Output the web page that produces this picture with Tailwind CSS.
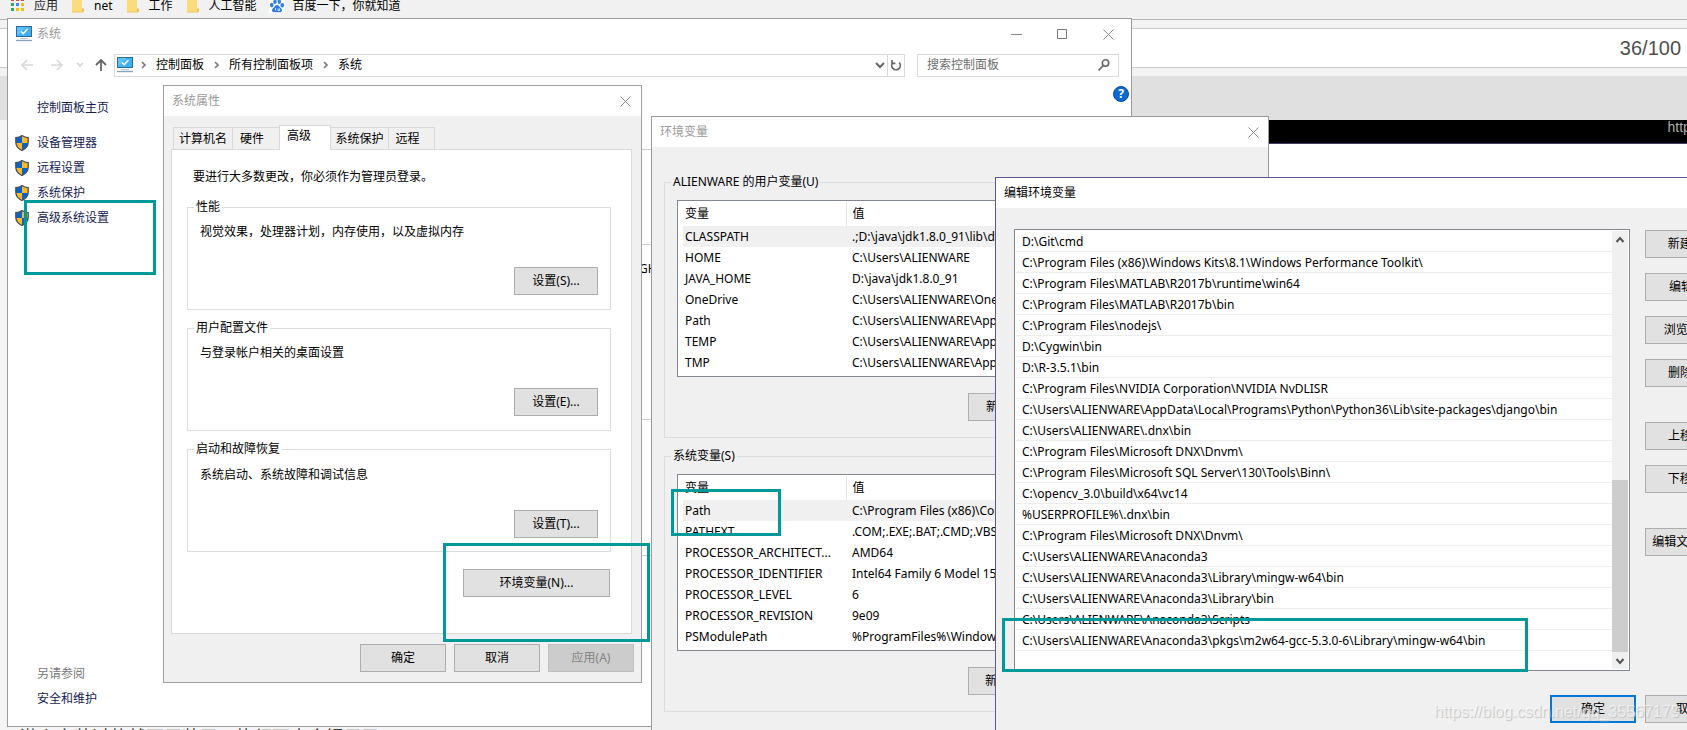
<!DOCTYPE html>
<html lang="zh-CN">
<head>
<meta charset="utf-8">
<title>环境变量</title>
<script src="https://cdn.jsdelivr.net/npm/@tailwindcss/browser@4"></script>
</head>
<body class="relative h-screen overflow-hidden bg-[#f5f5f5] font-['Noto_Sans','Noto_Sans_CJK_SC',sans-serif] text-xs leading-[18px] text-black">

<svg class="hidden" aria-hidden="true">
  <symbol id="pc" viewBox="0 0 16 16">
    <rect x="0.5" y="0.5" width="15" height="10" fill="#3fb0f8" stroke="#2f6a94"/>
    <path d="M1 10 L10 1 H1Z" fill="#5cc2ff"/>
    <path d="M5 5.5 L7.2 7.7 L11.5 3" fill="none" stroke="#fff" stroke-width="1.5"/>
    <path d="M4 12.5h8" stroke="#b9c9d6"/><path d="M0 14.5h16" stroke="#8ba3b8" stroke-width="1.4"/>
  </symbol>
  <symbol id="shield" viewBox="0 0 14 16">
    <path d="M7 .6C5.2 2 3 2.6.8 2.6V7c0 4 2.400 6.800 6.200 8.500C10.800 13.800 13.200 11 13.200 7V2.600C11 2.600 8.800 2 7 .6Z" fill="#0a63c9"/>
    <path d="M7 .6C8.800 2 11 2.600 13.200 2.600V8H7Z" fill="#fbb829"/>
    <path d="M7 15.500C3.600 14 1.200 11.500.9 8H7Z" fill="#fbb829"/>
    <path d="M7 .6C5.200 2 3 2.600.8 2.600V7c0 4 2.400 6.800 6.200 8.500C10.800 13.800 13.200 11 13.200 7V2.600C11 2.600 8.800 2 7 .6Z" fill="none" stroke="#4a4f57" stroke-width="1.300"/>
  </symbol>
  <symbol id="close" viewBox="0 0 11 11"><path d="M.5.5l10 10M10.500.5l-10 10" stroke="currentColor" fill="none"/></symbol>
  <symbol id="crumb" viewBox="0 0 6 8"><path d="M1 1l3 3-3 3" fill="none" stroke="#777" stroke-width="1.600"/></symbol>
  <symbol id="folder" viewBox="0 0 12 13"><path d="M0 0h10v9h2v3H0z" fill="#fbdb7c"/><path d="M10 8.500h2V11l-1 1h-1z" fill="#e9bf4c"/><path d="M0 12h11" stroke="#edc65a"/></symbol>
</svg>

<!-- Browser page behind the windows -->
<main class="flex h-full flex-col overflow-hidden">
  <nav class="flex h-5 shrink-0 items-start border-b border-[#b5b5b5] bg-[#f1f1f1] pl-[11px] leading-3">
    <a href="#" class="flex gap-2.5 text-[#222]">
      <svg class="h-[11px] w-[13px] shrink-0" viewBox="0 0 13 11"><g><path fill="#ea4335" d="M0-2h3v3H0zM5-2h3v3H5zM10-2h3v3h-3z"/><path fill="#34a853" d="M0 3h3v3H0zM0 8h3v3H0z"/><path fill="#4285f4" d="M5 3h3v3H5z"/><path fill="#fbbc05" d="M10 3h3v3h-3zM5 8h3v3H5zM10 8h3v3h-3z"/></g></svg>
      应用</a>
    <a href="#" class="ml-3.5 flex gap-2.5"><svg class="h-[13px] w-3 shrink-0"><use href="#folder"/></svg>net</a>
    <a href="#" class="ml-3.5 flex gap-2.5"><svg class="h-[13px] w-3 shrink-0"><use href="#folder"/></svg>工作</a>
    <a href="#" class="ml-3.5 flex gap-2.5"><svg class="h-[13px] w-3 shrink-0"><use href="#folder"/></svg>人工智能</a>
    <a href="#" class="ml-3 flex gap-2"><svg class="h-[13px] w-4 shrink-0 bg-white" viewBox="0 0 16 13"><g fill="#2b7de9"><ellipse cx="2.800" cy="5" rx="1.800" ry="2.300"/><ellipse cx="6" cy="1.800" rx="1.700" ry="2.300"/><ellipse cx="10.300" cy="1.800" rx="1.700" ry="2.300"/><ellipse cx="13.300" cy="5.300" rx="1.800" ry="2.300"/><path d="M8 5c2 0 2.500 2 4 3.300 1.800 1.600 1 4-1.200 4-1 0-1.800-.4-2.800-.4s-1.800.4-2.800.4c-2.200 0-3-2.400-1.200-4C5.500 7 6 5 8 5z"/></g><path d="M6.500 8v2.500M9 8.500v2h1.500v-2" fill="none" stroke="#fff" stroke-width=".8"/></svg>百度一下，你就知道</a>
  </nav>
  <div class="shrink-0 bg-[#f3f3f3] py-2">
    <div class="flex h-10 items-center justify-end border-y border-[#c9c9c9] bg-white pr-1.5 font-['Liberation_Sans',sans-serif] text-xl text-[#4f4f4f]">36/100</div>
  </div>
  <div class="h-11 shrink-0 bg-[#e0e0e0]"></div>
  <div class="ml-[50%] h-6 shrink-0 overflow-hidden border-b border-[#3f3a66] bg-black pl-[824px] font-['Liberation_Sans',sans-serif] text-sm leading-[15px] whitespace-nowrap text-[#aaa]">https://blog.csdn.net</div>
  <div class="ml-[50%] grow bg-white"></div>
  <p class="-mt-px h-1 shrink-0 pl-5 text-lg leading-[22px] whitespace-nowrap text-[#333]">激么安装过的就不用装了，执行下去会提示已</p>
</main>

<!-- Control panel window -->
<section class="absolute top-[18px] left-[7px] flex h-[709px] w-[1125px] flex-col border border-[#9b9b9b] bg-white">
  <header class="flex h-[30px] items-center pl-2 text-[#999]">
    <svg class="h-4 w-4"><use href="#pc"/></svg>
    <h1 class="ml-[5px]">系统</h1>
    <div class="ml-auto flex gap-[35px] pr-[17px]">
      <button aria-label="最小化"><svg class="h-[11px] w-[11px]"><path d="M0 5.500h11" stroke="#888"/></svg></button>
      <button aria-label="最大化"><svg class="h-[11px] w-[11px]"><path d="M.5.5h9v9h-9z" fill="none" stroke="#777"/></svg></button>
      <button aria-label="关闭" class="text-[#888]"><svg class="h-[11px] w-[11px]"><use href="#close"/></svg></button>
    </div>
  </header>
  <div class="mt-1 flex h-6 items-center pr-3">
    <button aria-label="后退" class="ml-[13px]"><svg class="h-3 w-3" viewBox="0 0 12 12" fill="none" stroke="#d8d8d8" stroke-width="1.600"><path d="M12 6H1M6 1L1 6l5 5"/></svg></button>
    <button aria-label="前进" class="ml-[18px]"><svg class="h-3 w-3" viewBox="0 0 12 12" fill="none" stroke="#d8d8d8" stroke-width="1.600"><path d="M0 6h11M6 1l5 5-5 5"/></svg></button>
    <button aria-label="历史记录" class="ml-[13px]"><svg class="h-2 w-2" viewBox="0 0 8 8" fill="none" stroke="#d0d0d0" stroke-width="1.400"><path d="M1 2l3 3 3-3"/></svg></button>
    <button aria-label="上移" class="ml-[11px]"><svg class="h-3 w-3" viewBox="0 0 12 12" fill="none" stroke="#666" stroke-width="1.800"><path d="M6 12V1M1 6l5-5 5 5"/></svg></button>
    <div class="ml-[7px] flex h-[23px] grow items-center border border-[#d9d9d9] pl-0.5">
      <svg class="h-4 w-4"><use href="#pc"/></svg>
      <svg class="ml-2 h-2 w-1.5"><use href="#crumb"/></svg><a href="#" class="ml-[9px]">控制面板</a>
      <svg class="ml-2.5 h-2 w-1.5"><use href="#crumb"/></svg><a href="#" class="ml-[9px]">所有控制面板项</a>
      <svg class="ml-2.5 h-2 w-1.5"><use href="#crumb"/></svg><a href="#" class="ml-[9px]">系统</a>
      <button aria-label="展开地址" class="ml-auto pr-0.5"><svg class="h-2 w-2.5" viewBox="0 0 10 8" fill="none" stroke="#666" stroke-width="2"><path d="M1 2l4 4 4-4"/></svg></button>
      <button aria-label="刷新" class="flex h-full w-[17px] items-center justify-center border-l border-[#d9d9d9]"><svg class="h-3 w-3" viewBox="0 0 12 12" fill="none" stroke="#666" stroke-width="1.700"><path d="M3 3.400A4.300 4.300 0 1 0 9.200 3.600M2 1v3.300h3.400"/></svg></button>
    </div>
    <label class="ml-3 flex h-[23px] w-[202px] items-center border border-[#d9d9d9] pr-2 pl-[9px]">
      <input type="search" aria-label="搜索" placeholder="搜索控制面板" class="w-0 grow outline-none placeholder:text-[#6d6d6d]">
      <svg class="h-3 w-3" viewBox="0 0 12 12" fill="none" stroke="#666" stroke-width="1.600"><circle cx="7.500" cy="4" r="3.200"/><path d="M5.300 6.500L.6 11.400"/></svg>
    </label>
  </div>
  <div class="flex grow">
    <nav class="flex w-[155px] flex-col items-start pb-[18px] pl-[7px] text-[#151c55]">
      <a href="#" class="mt-[22px] pl-[22px]">控制面板主页</a>
      <a href="#" class="mt-[17px] flex items-center gap-2"><svg class="h-4 w-3.5"><use href="#shield"/></svg>设备管理器</a>
      <a href="#" class="mt-[7px] flex items-center gap-2"><svg class="h-4 w-3.5"><use href="#shield"/></svg>远程设置</a>
      <a href="#" class="mt-[7px] flex items-center gap-2"><svg class="h-4 w-3.5"><use href="#shield"/></svg>系统保护</a>
      <a href="#" class="mt-[7px] flex items-center gap-2"><svg class="h-4 w-3.5"><use href="#shield"/></svg>高级系统设置</a>
      <p class="mt-auto pl-[22px] text-[#777]">另请参阅</p>
      <a href="#" class="mt-[7px] pl-[22px]">安全和维护</a>
    </nav>
    <div class="relative grow">
      <button aria-label="帮助" class="absolute top-[9px] right-0.5 h-4 w-4 rounded-full border border-[#0a4fa0] bg-[#0b69cf] text-xs leading-[14px] font-bold text-white">?</button>
      <div class="mt-[72px] mr-[30px] flex flex-col divide-y divide-[#ccc] border-t border-[#ccc]">
        <div class="h-[95px]"></div>
        <div class="h-[175px] pt-[15px] pl-[476px]">GHz</div>
        <div class="h-[136px]"></div>
        <div></div>
      </div>
    </div>
  </div>
</section>

<!-- System properties -->
<section class="absolute top-[85px] left-[163px] w-[479px] border border-[#a0a0a0] bg-[#f0f0f0] pb-2.5">
  <header class="flex h-[30px] items-center justify-between bg-white pr-[10px] pl-2 text-[#999]">
    <h2>系统属性</h2>
    <button aria-label="关闭" class="text-[#888]"><svg class="h-[11px] w-[11px]"><use href="#close"/></svg></button>
  </header>
  <div class="mt-[9px] flex h-6 items-end pl-[9px]" role="tablist">
    <button role="tab" class="h-[22px] w-[60px] border border-b-0 border-[#d9d9d9]">计算机名</button>
    <button role="tab" class="h-[22px] w-[46px] border-t border-[#d9d9d9] pr-2">硬件</button>
    <button role="tab" aria-selected="true" class="relative -mb-px h-[25px] w-[52px] border border-b-0 border-[#d9d9d9] bg-white pr-3 pb-1">高级</button>
    <button role="tab" class="h-[22px] w-[58px] border-t border-r border-[#d9d9d9]">系统保护</button>
    <button role="tab" class="h-[22px] w-[46px] border-t border-r border-[#d9d9d9] pr-2">远程</button>
  </div>
  <div class="mr-[9px] ml-[7px] border border-[#d9d9d9] bg-white pr-5 pb-9 pl-[15px]">
    <p class="mt-[18px] pl-1.5">要进行大多数更改，你必须作为管理员登录。</p>
    <fieldset class="mt-3 h-[112px] border border-[#dcdcdc] pr-3 pl-1.5">
      <legend class="px-0.5">性能</legend>
      <p class="mt-[7px] pl-1.5">视觉效果，处理器计划，内存使用，以及虚拟内存</p>
      <div class="mt-[26px] flex justify-end"><button class="h-7 w-[84px] border border-[#adadad] bg-[#e1e1e1]">设置(S)...</button></div>
    </fieldset>
    <fieldset class="mt-[9px] h-[112px] border border-[#dcdcdc] pr-3 pl-1.5">
      <legend class="px-0.5">用户配置文件</legend>
      <p class="mt-[7px] pl-1.5">与登录帐户相关的桌面设置</p>
      <div class="mt-[26px] flex justify-end"><button class="h-7 w-[84px] border border-[#adadad] bg-[#e1e1e1]">设置(E)...</button></div>
    </fieldset>
    <fieldset class="mt-[9px] h-[112px] border border-[#dcdcdc] pr-3 pl-1.5">
      <legend class="px-0.5">启动和故障恢复</legend>
      <p class="mt-2 pl-1.5">系统启动、系统故障和调试信息</p>
      <div class="mt-[26px] flex justify-end"><button class="h-7 w-[84px] border border-[#adadad] bg-[#e1e1e1]">设置(T)...</button></div>
    </fieldset>
    <div class="mt-[17px] flex justify-end pr-px"><button class="h-7 w-[147px] border border-[#adadad] bg-[#e1e1e1]">环境变量(N)...</button></div>
  </div>
  <div class="mt-2.5 flex justify-end gap-2 pr-[7px]">
    <button class="h-7 w-[86px] border border-[#adadad] bg-[#e1e1e1]">确定</button>
    <button class="h-7 w-[86px] border border-[#adadad] bg-[#e1e1e1]">取消</button>
    <button disabled class="h-7 w-[86px] border border-[#bfbfbf] bg-[#ccc] text-[#838383]">应用(A)</button>
  </div>
</section>

<!-- Environment variables -->
<section class="absolute top-[116px] left-[651px] w-[618px] border border-[#9b9b9b] bg-[#f0f0f0] pb-14">
  <header class="flex h-[30px] items-center justify-between bg-white pr-[9px] pl-2 text-[#999]">
    <h2>环境变量</h2>
    <button aria-label="关闭" class="text-[#888]"><svg class="h-[11px] w-[11px]"><use href="#close"/></svg></button>
  </header>
  <div class="px-3 pt-[26px]">
    <fieldset class="h-[265px] border border-[#dcdcdc] px-1.5">
      <legend class="px-0.5">ALIENWARE 的用户变量(U)</legend>
      <div class="mx-1.5 mt-[9px] h-[177px] border border-[#82878f] bg-white pt-px pl-[5px]">
        <table class="w-full table-fixed border-collapse text-left whitespace-nowrap">
          <thead><tr class="h-6"><th class="w-[163px] border-r border-[#e5e5e5] pl-0.5 font-normal">变量</th><th class="pl-1.5 font-normal">值</th></tr></thead>
          <tbody>
            <tr class="h-[21px] bg-[#f0f0f0]"><td class="pl-0.5">CLASSPATH</td><td class="overflow-hidden pl-1.5">.;D:\java\jdk1.8.0_91\lib\dt.jar;D:\java\jdk1.8.0_91\lib\tools.jar</td></tr>
            <tr class="h-[21px]"><td class="pl-0.5">HOME</td><td class="pl-1.5">C:\Users\ALIENWARE</td></tr>
            <tr class="h-[21px]"><td class="pl-0.5">JAVA_HOME</td><td class="pl-1.5">D:\java\jdk1.8.0_91</td></tr>
            <tr class="h-[21px]"><td class="pl-0.5">OneDrive</td><td class="pl-1.5">C:\Users\ALIENWARE\OneDrive</td></tr>
            <tr class="h-[21px]"><td class="pl-0.5">Path</td><td class="pl-1.5">C:\Users\ALIENWARE\AppData</td></tr>
            <tr class="h-[21px]"><td class="pl-0.5">TEMP</td><td class="pl-1.5">C:\Users\ALIENWARE\AppData</td></tr>
            <tr class="h-[21px]"><td class="pl-0.5">TMP</td><td class="pl-1.5">C:\Users\ALIENWARE\AppData</td></tr>
          </tbody>
        </table>
      </div>
      <div class="mt-4 flex justify-end gap-[9px] pr-[5px]">
        <button class="h-7 w-[86px] border border-[#adadad] bg-[#e1e1e1]">新建(N)...</button>
        <button class="h-7 w-[86px] border border-[#adadad] bg-[#e1e1e1]">编辑(E)...</button>
        <button class="h-7 w-[86px] border border-[#adadad] bg-[#e1e1e1]">删除(D)</button>
      </div>
    </fieldset>
    <fieldset class="mt-[9px] h-[265px] border border-[#dcdcdc] px-1.5">
      <legend class="px-0.5">系统变量(S)</legend>
      <div class="mx-1.5 mt-[9px] h-[177px] border border-[#82878f] bg-white pt-px pl-[5px]">
        <table class="w-full table-fixed border-collapse text-left whitespace-nowrap">
          <thead><tr class="h-6"><th class="w-[163px] border-r border-[#e5e5e5] pl-0.5 font-normal">变量</th><th class="pl-1.5 font-normal">值</th></tr></thead>
          <tbody>
            <tr class="h-[21px] bg-[#f0f0f0]"><td class="pl-0.5">Path</td><td class="pl-1.5">C:\Program Files (x86)\Common Files</td></tr>
            <tr class="h-[21px]"><td class="pl-0.5">PATHEXT</td><td class="pl-1.5">.COM;.EXE;.BAT;.CMD;.VBS;.VBE;.JS</td></tr>
            <tr class="h-[21px]"><td class="pl-0.5">PROCESSOR_ARCHITECT...</td><td class="pl-1.5">AMD64</td></tr>
            <tr class="h-[21px]"><td class="pl-0.5">PROCESSOR_IDENTIFIER</td><td class="pl-1.5">Intel64 Family 6 Model 158 Stepping 9</td></tr>
            <tr class="h-[21px]"><td class="pl-0.5">PROCESSOR_LEVEL</td><td class="pl-1.5">6</td></tr>
            <tr class="h-[21px]"><td class="pl-0.5">PROCESSOR_REVISION</td><td class="pl-1.5">9e09</td></tr>
            <tr class="h-[21px]"><td class="pl-0.5">PSModulePath</td><td class="pl-1.5">%ProgramFiles%\WindowsPowerShell</td></tr>
          </tbody>
        </table>
      </div>
      <div class="mt-4 flex justify-end gap-[9px] pr-[5px]">
        <button class="h-7 w-[86px] border border-[#adadad] bg-[#e1e1e1]">新建(W)...</button>
        <button class="h-7 w-[86px] border border-[#adadad] bg-[#e1e1e1]">编辑(I)...</button>
        <button class="h-7 w-[86px] border border-[#adadad] bg-[#e1e1e1]">删除(L)</button>
      </div>
    </fieldset>
  </div>
</section>

<!-- Edit environment variable -->
<section class="absolute top-[177px] left-[995px] w-[754px] border border-[#5b5790] bg-[#f0f0f0] pb-4">
  <header class="flex h-[30px] items-center bg-white pl-2"><h2>编辑环境变量</h2></header>
  <div class="mt-[21px] flex gap-[15px] pr-[17px] pl-[18px]">
    <div class="flex h-[442px] w-[616px] border border-[#82878f] bg-white p-px">
      <ul class="grow divide-y divide-[#ececec] whitespace-nowrap leading-[22px]">
        <li class="h-[21px] pl-1.5">D:\Git\cmd</li>
        <li class="h-[21px] pl-1.5">C:\Program Files (x86)\Windows Kits\8.1\Windows Performance Toolkit\</li>
        <li class="h-[21px] pl-1.5">C:\Program Files\MATLAB\R2017b\runtime\win64</li>
        <li class="h-[21px] pl-1.5">C:\Program Files\MATLAB\R2017b\bin</li>
        <li class="h-[21px] pl-1.5">C:\Program Files\nodejs\</li>
        <li class="h-[21px] pl-1.5">D:\Cygwin\bin</li>
        <li class="h-[21px] pl-1.5">D:\R-3.5.1\bin</li>
        <li class="h-[21px] pl-1.5">C:\Program Files\NVIDIA Corporation\NVIDIA NvDLISR</li>
        <li class="h-[21px] pl-1.5">C:\Users\ALIENWARE\AppData\Local\Programs\Python\Python36\Lib\site-packages\django\bin</li>
        <li class="h-[21px] pl-1.5">C:\Users\ALIENWARE\.dnx\bin</li>
        <li class="h-[21px] pl-1.5">C:\Program Files\Microsoft DNX\Dnvm\</li>
        <li class="h-[21px] pl-1.5">C:\Program Files\Microsoft SQL Server\130\Tools\Binn\</li>
        <li class="h-[21px] pl-1.5">C:\opencv_3.0\build\x64\vc14</li>
        <li class="h-[21px] pl-1.5">%USERPROFILE%\.dnx\bin</li>
        <li class="h-[21px] pl-1.5">C:\Program Files\Microsoft DNX\Dnvm\</li>
        <li class="h-[21px] pl-1.5">C:\Users\ALIENWARE\Anaconda3</li>
        <li class="h-[21px] pl-1.5">C:\Users\ALIENWARE\Anaconda3\Library\mingw-w64\bin</li>
        <li class="h-[21px] pl-1.5">C:\Users\ALIENWARE\Anaconda3\Library\bin</li>
        <li class="h-[21px] pl-1.5">C:\Users\ALIENWARE\Anaconda3\Scripts</li>
        <li class="h-[21px] pl-1.5">C:\Users\ALIENWARE\Anaconda3\pkgs\m2w64-gcc-5.3.0-6\Library\mingw-w64\bin</li>
        <li class="h-[18px]"></li>
      </ul>
      <div class="flex w-4 flex-col bg-[#f0f0f0]">
        <button aria-label="向上滚动" class="flex h-[17px] items-center justify-center"><svg class="h-2 w-2.5" viewBox="0 0 10 8" fill="none" stroke="#555" stroke-width="2"><path d="M1.500 6L5 2l3.500 4"/></svg></button>
        <div class="mt-auto h-[172px] bg-[#cdcdcd]"></div>
        <button aria-label="向下滚动" class="flex h-[17px] items-center justify-center"><svg class="h-2 w-2.5" viewBox="0 0 10 8" fill="none" stroke="#555" stroke-width="2"><path d="M1.500 2L5 6l3.500-4"/></svg></button>
      </div>
    </div>
    <div class="flex flex-col gap-[15px] pt-px">
      <button class="h-7 w-[86px] border border-[#adadad] bg-[#e1e1e1]">新建(N)</button>
      <button class="h-7 w-[86px] border border-[#adadad] bg-[#e1e1e1]">编辑(E)</button>
      <button class="h-7 w-[86px] border border-[#adadad] bg-[#e1e1e1]">浏览(B)...</button>
      <button class="h-7 w-[86px] border border-[#adadad] bg-[#e1e1e1]">删除(D)</button>
      <button class="mt-5 h-7 w-[86px] border border-[#adadad] bg-[#e1e1e1]">上移(U)</button>
      <button class="h-7 w-[86px] border border-[#adadad] bg-[#e1e1e1]">下移(O)</button>
      <button class="mt-5 h-7 w-[86px] border border-[#adadad] bg-[#e1e1e1]">编辑文本(T)...</button>
    </div>
  </div>
  <div class="mt-6 flex justify-end gap-[9px] pr-[17px]">
    <button class="h-7 w-[86px] border-2 border-[#0078d7] bg-[#e1e1e1]">确定</button>
    <button class="h-7 w-[86px] border border-[#adadad] bg-[#e1e1e1]">取消</button>
  </div>
</section>

<!-- Highlight boxes and watermark laid over the windows -->
<div class="absolute top-[200px] left-6 h-[75px] w-[132px] border-3 border-[#009999]"></div>
<div class="absolute top-[543px] left-[443px] h-[99px] w-[207px] border-3 border-[#009999]"></div>
<div class="absolute top-[489px] left-[671px] h-[47px] w-[110px] border-3 border-[#009999]"></div>
<div class="absolute top-[618px] left-[1002px] h-[54px] w-[526px] border-3 border-[#009999]"></div>
<div class="absolute top-[703px] left-[1434px] font-['Liberation_Sans',sans-serif] text-base leading-[18px] whitespace-nowrap text-white/60 [text-shadow:1px_1px_1px_#c0c0c0]">https://blog.csdn.net/qq_35567179</div>
</body>
</html>
